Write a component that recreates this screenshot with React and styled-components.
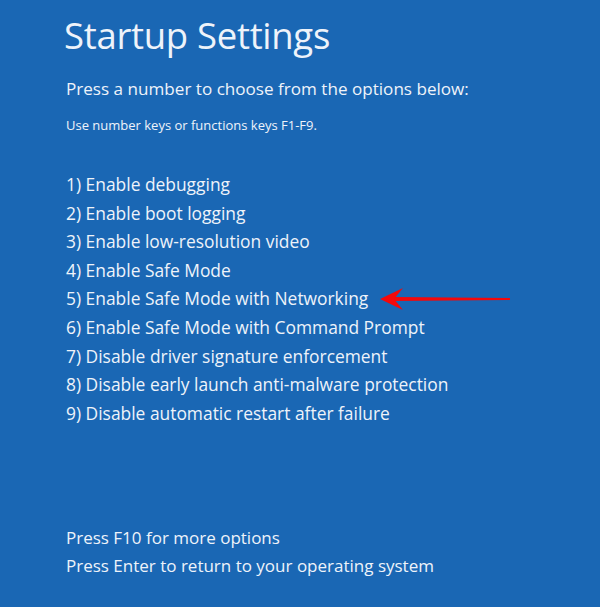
import React from "react";
import styled, { createGlobalStyle } from "styled-components";

const GlobalStyle = createGlobalStyle`
  html, body {
    margin: 0;
    padding: 0;
    background: #1a67b4;
  }
`;

const Screen = styled.div`
  width: 600px;
  height: 607px;
  box-sizing: border-box;
  background: #1a67b4;
  color: #eef3fa;
  font-family: "Open Sans", "Noto Sans", sans-serif;
  padding: 11px 0 0 66px;
  display: flex;
  flex-direction: column;
  overflow: hidden;
`;

const Title = styled.h1`
  margin: 0 0 0 -2px;
  font-size: 36.5px;
  font-weight: 400;
  line-height: 48px;
  letter-spacing: -0.3px;
`;

const Prompt = styled.div`
  margin-top: 18px;
  font-size: 17.1px;
  line-height: 24px;
`;

const Hint = styled.div`
  margin-top: 15px;
  font-size: 13px;
  line-height: 18px;
`;

const Options = styled.ol`
  list-style: none;
  margin: 36px 0 0;
  padding: 0;
  display: flex;
  flex-direction: column;
`;

const Option = styled.li`
  font-size: 17.4px;
  line-height: 28.6px;
  display: flex;
  align-items: center;
  gap: 11px;
`;

const Footer = styled.div`
  margin-top: auto;
  margin-bottom: 26px;
  display: flex;
  flex-direction: column;
`;

const FooterLine = styled.div`
  font-size: 17px;
  line-height: 28.6px;
`;

const ArrowSvg = styled.svg`
  flex: none;
  margin-top: 1px;
`;

const Arrow = () => (
  <ArrowSvg width="132" height="24" viewBox="0 0 132 24">
    <path d="M14 10 L131 11.1 L131 12.9 L14 14 Z" fill="#f5080a" />
    <path d="M1 12 L24 1 L15 12 L24 23 Z" fill="#f5080a" />
  </ArrowSvg>
);

const options = [
  "Enable debugging",
  "Enable boot logging",
  "Enable low-resolution video",
  "Enable Safe Mode",
  "Enable Safe Mode with Networking",
  "Enable Safe Mode with Command Prompt",
  "Disable driver signature enforcement",
  "Disable early launch anti-malware protection",
  "Disable automatic restart after failure",
];

export default function App() {
  return (
    <>
      <GlobalStyle />
      <Screen>
        <Title>Startup Settings</Title>
        <Prompt>Press a number to choose from the options below:</Prompt>
        <Hint>Use number keys or functions keys F1-F9.</Hint>
        <Options>
          {options.map((text, i) => (
            <Option key={text}>
              <span>
                {i + 1}) {text}
              </span>
              {i === 4 && <Arrow />}
            </Option>
          ))}
        </Options>
        <Footer>
          <FooterLine>Press F10 for more options</FooterLine>
          <FooterLine>Press Enter to return to your operating system</FooterLine>
        </Footer>
      </Screen>
    </>
  );
}
